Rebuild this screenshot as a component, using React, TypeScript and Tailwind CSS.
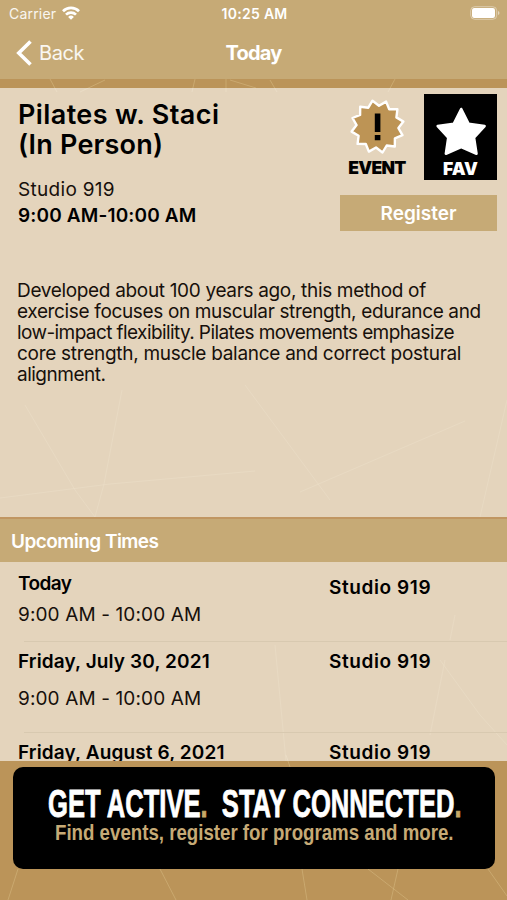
import React from "react";
import clsx from "clsx";

interface Session {
  day: string;
  time: string;
  room: string;
  dayClassName?: string;
}

const SESSIONS: Session[] = [
  {
    day: "Today",
    time: "9:00 AM - 10:00 AM",
    room: "Studio 919",
    dayClassName: "tracking-[-0.6px]",
  },
  { day: "Friday, July 30, 2021", time: "9:00 AM - 10:00 AM", room: "Studio 919" },
  { day: "Friday, August 6, 2021", time: "9:00 AM - 10:00 AM", room: "Studio 919" },
];

const DESCRIPTION = [
  { text: "Developed about 100 years ago, this method of", className: "tracking-[-0.33px]" },
  { text: "exercise focuses on muscular strength, edurance and", className: "tracking-[-0.35px]" },
  { text: "low-impact flexibility. Pilates movements emphasize", className: "tracking-[-0.59px]" },
  { text: "core strength, muscle balance and correct postural", className: "tracking-[-0.29px]" },
  { text: "alignment.", className: "tracking-[-0.5px]" },
];

// 12-pointed seal, alternating outer and inner radius
const SEAL_POINTS = Array.from({ length: 24 }, (_, i) => {
  const angle = ((-101 + i * 15) * Math.PI) / 180;
  const radius = i % 2 === 0 ? 26.4 : 21;
  return `${(30.5 + radius * Math.cos(angle)).toFixed(1)},${(32.6 + radius * Math.sin(angle)).toFixed(1)}`;
}).join(" ");

// thin scratches on the page background
const BackgroundLines = () => (
  <svg
    className="absolute inset-0 -z-10"
    width="507"
    height="900"
    fill="none"
    stroke="#d9bd85"
  >
    <g strokeOpacity="0.5">
      <path d="M50 79L57 92M105 80L80 92M195 79L192 92M226 79V92M230 80L256 88M270 80L277 92M395 79L388 92" />
      <path d="M286 755L290 767M18 869L8 900M160 869L176 900M302 869L307 900M368 869L408 900M398 869L391 900M488 869L507 896" />
    </g>
    <g strokeOpacity="0.35">
      <path d="M0 498L110 484L255 471M25 405L75 490L95 517M122 390L104 484L95 517M245 385L330 500M300 492L465 421M507 400L480 517" />
      <path d="M275 645L286 761M440 660L480 715L507 745M445 660L430 735M455 615L450 640" />
    </g>
  </svg>
);

const StatusBar = () => (
  <div className="flex h-[26px] items-center justify-between pl-[9px] pr-[7px] text-white">
    <div className="flex w-40 items-center gap-[6px]">
      <span className="text-[14px] tracking-[0.2px] text-white/90">Carrier</span>
      <svg width="18" height="14" viewBox="0 0 18 14" fill="none" stroke="white" strokeWidth="2.7">
        <path d="M1 5.2a11.4 11.4 0 0 1 16 0M4 8.6a7.1 7.1 0 0 1 10 0" />
        <path d="M9 13.8L6.1 10.9a4.2 4.2 0 0 1 5.8 0z" fill="white" stroke="none" />
      </svg>
    </div>
    <span className="text-[14px] font-semibold tracking-[0.3px]">10:25 AM</span>
    <div className="flex w-40 justify-end">
      <svg width="30" height="14" viewBox="0 0 30 14">
        <rect x="0.7" y="0.7" width="26" height="12.6" rx="4" fill="none" stroke="white" strokeOpacity="0.4" />
        <rect x="2" y="2" width="23" height="10" rx="2.2" fill="white" />
        <path d="M28 5v4q1.5-.6 1.5-2T28 5z" fill="white" fillOpacity="0.5" />
      </svg>
    </div>
  </div>
);

const NavBar = () => (
  <div className="flex h-[53px] items-center justify-between px-4 text-white">
    <button className="flex w-32 items-center gap-[7px]">
      <svg width="16" height="26" viewBox="0 0 16 26" fill="none" stroke="white" strokeWidth="3.6">
        <path d="M14.5 1.5L2.8 13l11.7 11.5" />
      </svg>
      <span className="text-[20px] tracking-[-0.4px] text-white/90">Back</span>
    </button>
    <h1 className="text-[20px] font-bold tracking-[-0.8px]">Today</h1>
    <div className="w-32" />
  </div>
);

const EventBadge = () => (
  <div className="flex w-[60px] flex-col items-center">
    <svg width="60" height="64" viewBox="0 0 60 64">
      <polygon
        points={SEAL_POINTS}
        fill="#bd9455"
        stroke="white"
        strokeWidth="2.4"
        strokeLinejoin="round"
      />
      <path d="M27.8 19.5h5.6v18.5h-5.6zM27.8 41h5.6v5.2h-5.6z" fill="black" />
    </svg>
    <span className="text-[17.5px] leading-5 font-black tracking-[-0.7px] text-black">EVENT</span>
  </div>
);

const FavButton = () => (
  <button className="flex h-[86px] w-[73px] flex-col items-center bg-black text-white">
    <svg className="mt-3" width="56" height="53" viewBox="0 0 56 53">
      <path
        d="M28.2 3L35.5 17.7L51.6 20L41 31.5L43.5 47.7L28.2 41L12.9 47.7L15.3 31.5L4.7 20L20.9 17.7Z"
        fill="white"
        stroke="white"
        strokeWidth="2.6"
        strokeLinejoin="round"
      />
    </svg>
    <span className="text-[17.5px] leading-5 font-black">FAV</span>
  </button>
);

const EventDetails = () => (
  <section className="h-[429px] bg-white/60">
    <div className="flex justify-between pl-[18px] pr-[10px]">
      <div className="pt-[12px]">
        <h2 className="text-[27px] leading-[30px] font-semibold text-black">
          <span className="block tracking-[0.4px]">Pilates w. Staci</span>
          <span className="block tracking-[0.2px]">(In Person)</span>
        </h2>
        <p className="mt-[17px] text-[19px] leading-[26px] tracking-[0.3px]">Studio 919</p>
        <p className="text-[19px] leading-[26px] font-semibold tracking-[0.15px] text-black">
          9:00 AM-10:00 AM
        </p>
      </div>
      <div className="w-[157px] pt-[6px]">
        <div className="flex justify-between pl-[7px]">
          <EventBadge />
          <FavButton />
        </div>
        <button className="mt-[15px] h-[36px] w-full bg-[#c6aa76] pt-[2px] text-[19px] font-semibold text-white">
          Register
        </button>
      </div>
    </div>
    <p className="mt-[50px] pl-[17px] text-[19px] leading-[20.9px] whitespace-nowrap">
      {DESCRIPTION.map((line) => (
        <span key={line.text} className={clsx("block w-fit", line.className)}>
          {line.text}
        </span>
      ))}
    </p>
  </section>
);

const SessionRow = ({ session, first }: { session: Session; first: boolean }) => (
  <li className={first ? "h-[79px]" : "h-[91px]"}>
    {!first && <div className="ml-6 h-px bg-[#d8c9b0]" />}
    <div className={clsx("flex pl-[18px]", first ? "pt-[9px]" : "pt-[7px]")}>
      <div className="w-[311px]">
        <p
          className={clsx(
            "text-[19px] leading-[26px] font-semibold text-black",
            session.dayClassName ?? "tracking-[0.12px]"
          )}
        >
          {session.day}
        </p>
        <p
          className={clsx(
            "text-[19px] leading-[26px] tracking-[0.12px]",
            first ? "mt-[5px]" : "mt-[11px]"
          )}
        >
          {session.time}
        </p>
      </div>
      <p
        className={clsx(
          "text-[19px] leading-[26px] font-semibold tracking-[0.6px] text-black",
          first && "mt-1"
        )}
      >
        {session.room}
      </p>
    </div>
  </li>
);

const Banner = () => (
  <div className="mx-auto h-[102px] w-[482px] rounded-[10px] bg-black pt-[21px] font-['Liberation_Sans',sans-serif] font-bold whitespace-nowrap">
    <p className="ml-[35px] w-fit origin-left scale-x-[0.673] text-[38px] leading-8 text-white [-webkit-text-stroke:0.8px_currentColor]">
      GET ACTIVE<span className="text-[#c6aa66]">.</span>&nbsp; STAY CONNECTED
      <span className="text-[#c6aa66]">.</span>
    </p>
    <p className="ml-[42px] w-fit origin-left scale-x-[0.849] text-[22px] leading-[26px] text-[#c6aa76]">
      Find events, register for programs and more.
    </p>
  </div>
);

const App: React.FC = () => {
  return (
    <main className="relative isolate flex h-[900px] w-[507px] flex-col overflow-hidden bg-[#bb9459] font-['Inter','Liberation_Sans',sans-serif] text-[#17100b]">
      <BackgroundLines />
      <header className="mb-[9px] h-[79px] shrink-0 bg-[#c6aa76]">
        <StatusBar />
        <NavBar />
      </header>
      <EventDetails />
      <h3 className="h-[45px] shrink-0 border-t-2 border-[#c09662] bg-[#c6aa76] pl-[11px] text-[19px] leading-[45px] font-semibold tracking-[-0.55px] text-white">
        Upcoming Times
      </h3>
      <ul className="h-[199px] shrink-0 overflow-hidden bg-white/60">
        {SESSIONS.map((session, index) => (
          <SessionRow key={session.day} session={session} first={index === 0} />
        ))}
      </ul>
      <footer className="pt-[6px]">
        <Banner />
      </footer>
    </main>
  );
};

export default App;
